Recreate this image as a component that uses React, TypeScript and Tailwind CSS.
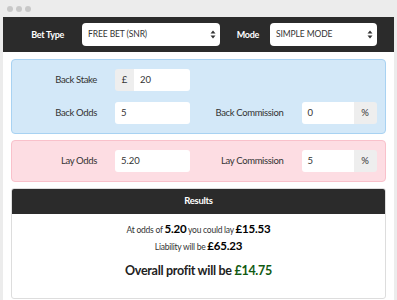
import React from 'react';

const font = { fontFamily: 'Lato, "Open Sans", sans-serif' };

// 上下矢印 (select のつまみ)
const Arrows = () => (
  <svg width="6" height="9" viewBox="0 0 6 9" className="shrink-0">
    <path d="M3 0.5 L5.5 3.5 H0.5 Z" fill="#333" />
    <path d="M3 8.5 L5.5 5.5 H0.5 Z" fill="#333" />
  </svg>
);

const Select = ({ value, className }: { value: string; className: string }) => (
  <div
    className={`h-[23px] bg-white rounded-[4px] flex items-center justify-between pl-[6px] pr-[4px] text-[8.5px] tracking-[-0.1px] text-[#333] ${className}`}
  >
    <span>{value}</span>
    <Arrows />
  </div>
);

const Field = ({ label, value, prefix, suffix }: { label: string; value: string; prefix?: string; suffix?: string }) => (
  <div className="flex items-center">
    <div className="w-[85px] text-right text-[9.5px] tracking-[-0.35px] text-[#333]">{label}</div>
    <div className="ml-[18px] w-[75px] h-[22px] flex rounded-[3px] overflow-hidden">
      {prefix && (
        <div className="w-[19px] bg-[#eeeeee] flex items-center justify-center text-[9.5px] text-[#333]">{prefix}</div>
      )}
      <div className="flex-1 bg-white flex items-center pl-[6px] text-[9.5px] text-[#333]">{value}</div>
      {suffix && (
        <div className="w-[23px] bg-[#eeeeee] flex items-center justify-center text-[9.5px] text-[#333]">{suffix}</div>
      )}
    </div>
  </div>
);

export default function App() {
  return (
    <div className="w-[397px] h-[300px] bg-[#ececec] flex flex-col overflow-hidden" style={font}>
      {/* ウィンドウの枠 */}
      <div className="h-[17px] flex items-center gap-[3px] pl-[7px] shrink-0">
        <span className="w-[6px] h-[6px] rounded-full bg-[#c8c8c8]" />
        <span className="w-[6px] h-[6px] rounded-full bg-[#c8c8c8]" />
        <span className="w-[6px] h-[6px] rounded-full bg-[#c8c8c8]" />
      </div>

      <div className="flex-1 mx-[3px] bg-white flex flex-col">
        {/* ヘッダー */}
        <div className="h-[35px] bg-[#2b2b2b] flex items-center shrink-0">
          <div className="w-[61px] text-right text-[9px] font-bold tracking-[-0.3px] text-white">Bet Type</div>
          <Select value="FREE BET (SNR)" className="ml-[18px] w-[138px]" />
          <div className="w-[39px] text-right text-[9px] font-bold tracking-[-0.3px] text-white">Mode</div>
          <Select value="SIMPLE MODE" className="ml-[11px] w-[107px]" />
        </div>

        <div className="px-[8px] pt-[7px] flex flex-col gap-[6px]">
          {/* バック */}
          <div className="bg-[#d3e8f8] border border-[#a8d2f2] rounded-[4px] py-[9px] grid grid-cols-2 gap-y-[11px]">
            <Field label="Back Stake" value="20" prefix="£" />
            <div />
            <Field label="Back Odds" value="5" />
            <Field label="Back Commission" value="0" suffix="%" />
          </div>

          {/* レイ */}
          <div className="bg-[#fddde3] border border-[#f9c1cb] rounded-[4px] py-[9px] grid grid-cols-2">
            <Field label="Lay Odds" value="5.20" />
            <Field label="Lay Commission" value="5" suffix="%" />
          </div>

          {/* 結果 */}
          <div className="border border-[#dddddd] rounded-[3px] overflow-hidden h-[111px] flex flex-col">
            <div className="h-[25px] bg-[#2b2b2b] flex items-center justify-center text-[9.5px] font-bold tracking-[-0.3px] text-white">
              Results
            </div>
            <div className="flex-1 flex flex-col items-center text-[#333]">
              <div className="mt-[7px] text-[8.5px] tracking-[-0.25px] leading-[15px]">
                At odds of <span className="text-[11.5px] font-bold tracking-[-0.2px] text-black">5.20</span> you could lay{' '}
                <span className="text-[11.5px] font-bold tracking-[-0.2px] text-black">£15.53</span>
              </div>
              <div className="text-[8.5px] tracking-[-0.25px] leading-[15px]">
                Liability will be <span className="text-[11.5px] font-bold tracking-[-0.2px] text-black">£65.23</span>
              </div>
              <div className="mt-[7px] text-[12.5px] font-bold tracking-[-0.3px] text-[#222]">
                Overall profit will be <span className="text-[#115a11]">£14.75</span>
              </div>
            </div>
          </div>
        </div>
      </div>
    </div>
  );
}
